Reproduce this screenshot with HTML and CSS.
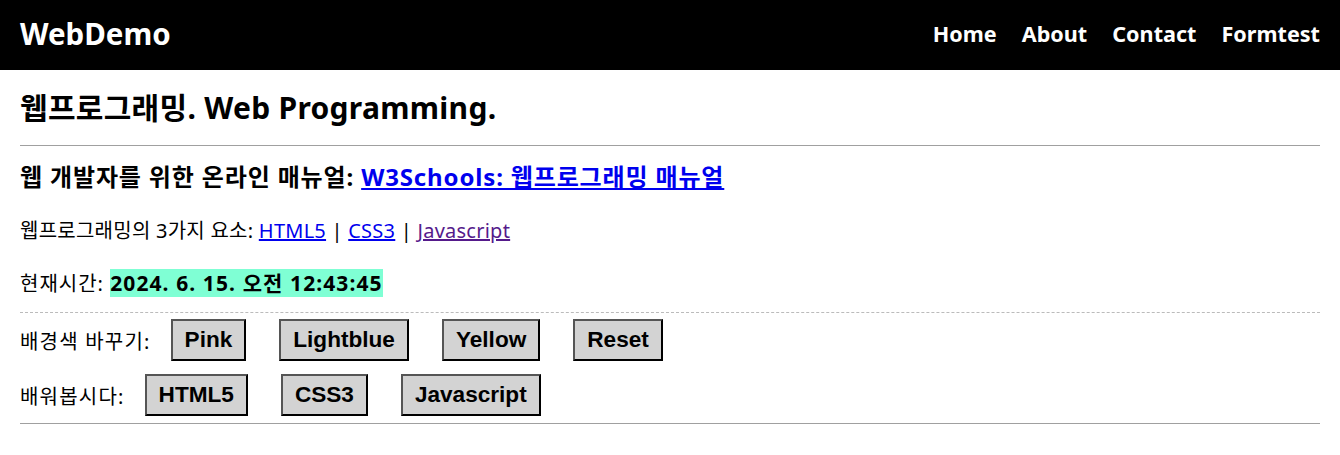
FILE: index.html
```html
<!DOCTYPE html>
<html lang="ko">
<head>
<meta charset="utf-8">
<title>WebDemo</title>
<link rel="stylesheet" href="styles.css">
</head>
<body>
<header class="navbar">
  <div class="brand">WebDemo</div>
  <nav class="nav">
    <a href="#">Home</a>
    <a href="#">About</a>
    <a href="#">Contact</a>
    <a href="#">Formtest</a>
  </nav>
</header>
<main class="content">
  <h1 class="title">웹프로그래밍. Web Programming.</h1>
  <hr class="rule">
  <h3 class="subtitle">웹 개발자를 위한 온라인 매뉴얼: <a href="#">W3Schools: 웹프로그래밍 매뉴얼</a></h3>
  <p class="line">웹프로그래밍의 3가지 요소: <a href="#">HTML5</a> | <a href="#">CSS3</a> | <a href="#" class="visited">Javascript</a></p>
  <p class="line time-line">현재시간: <span class="time">2024. 6. 15. 오전 12:43:45</span></p>
  <div class="dashed"></div>
  <div class="row first">
    <span class="label">배경색 바꾸기:</span>
    <button class="btn">Pink</button>
    <button class="btn">Lightblue</button>
    <button class="btn">Yellow</button>
    <button class="btn">Reset</button>
  </div>
  <div class="row">
    <span class="label">배워봅시다:</span>
    <button class="btn">HTML5</button>
    <button class="btn">CSS3</button>
    <button class="btn">Javascript</button>
  </div>
  <hr class="rule bottom">
</main>
</body>
</html>
```
FILE: styles.css
```css
html, body {
  margin: 0;
  padding: 0;
  background: #fff;
  font-family: "Noto Sans", "Noto Sans CJK KR", sans-serif;
  color: #000;
}
.navbar {
  height: 70px;
  background: #000;
  display: flex;
  align-items: center;
  justify-content: space-between;
  padding: 0 20px;
  box-sizing: border-box;
}
.brand {
  color: #fff;
  font-weight: bold;
  font-size: 29.5px;
  line-height: 40px;
  margin-top: -2px;
}
.nav {
  display: flex;
  gap: 25px;
  margin-top: -2px;
}
.nav a {
  color: #fff;
  text-decoration: none;
  font-weight: bold;
  font-size: 21.6px;
  line-height: 30px;
}
.content {
  padding: 0 20px;
}
.title {
  margin: 18px 0 0;
  font-size: 30px;
  line-height: 40px;
  font-weight: bold;
  letter-spacing: 0.3px;
}
.rule {
  border: 0;
  border-top: 1px solid #a0a0a0;
  margin: 17px 0 0;
}
.subtitle {
  margin: 15px 0 0;
  font-size: 24px;
  line-height: 32px;
  font-weight: bold;
  letter-spacing: 0.85px;
}
.subtitle a { color: #0000ee; }
.line {
  margin: 24px 0 0;
  font-size: 20px;
  line-height: 28px;
  letter-spacing: 0.25px;
}
.line a { color: #0000ee; }
.line a.visited { color: #551a8b; }
.time-line {
  margin-top: 23px;
  line-height: 30px;
  letter-spacing: 1px;
}
.time {
  background: #7fffd4;
  font-weight: bold;
  font-size: 21px;
  letter-spacing: 1.1px;
}
.dashed {
  border-top: 1px dashed #bbb;
  margin-top: 13px;
}
.row {
  display: flex;
  align-items: center;
  gap: 33px;
  margin-top: 13px;
}
.row.first { margin-top: 6px; }
.label {
  font-size: 20px;
  letter-spacing: 1.2px;
  margin-right: -13px;
}
.btn {
  font-family: "Liberation Sans", Arial, sans-serif;
  font-weight: bold;
  font-size: 22.6px;
  line-height: 24px;
  height: 42px;
  padding: 0 12px;
  background: #d3d3d3;
  border: 2px solid;
  border-color: #555 #000 #000 #555;
  color: #000;
}
.rule.bottom { margin-top: 7px; }
```
